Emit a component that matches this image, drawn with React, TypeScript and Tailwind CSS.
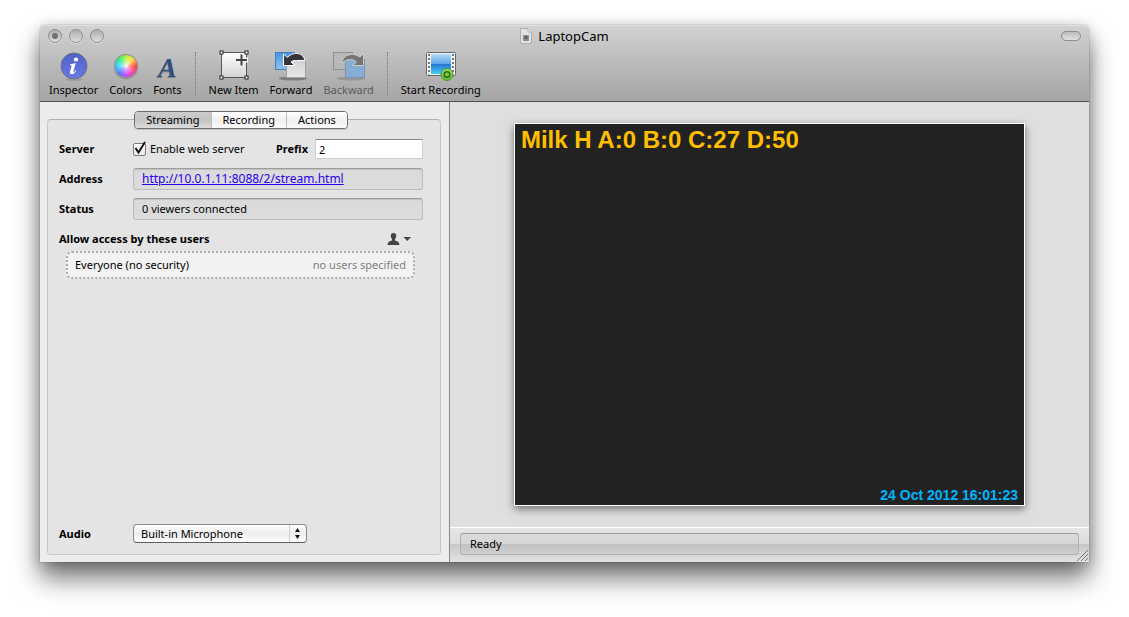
import { useId, useState } from 'react';
import type { ReactNode } from 'react';
import clsx from 'clsx';

const TABS = ['Streaming', 'Recording', 'Actions'] as const;
type Tab = (typeof TABS)[number];

function InspectorIcon() {
  return (
    <svg width="30" height="32" viewBox="0 0 30 32" aria-hidden="true">
      <defs>
        <linearGradient id="info" x1="0" y1="0" x2="0" y2="1">
          <stop offset="0" stopColor="#5060c8" />
          <stop offset="1" stopColor="#6a7ae4" />
        </linearGradient>
      </defs>
      <ellipse cx="15" cy="29.500" rx="9" ry="1.5" fill="#000" opacity=".12" />
      <circle cx="15" cy="16" r="13" fill="url(#info)" stroke="#6c6f86" />
      <ellipse cx="17" cy="9.6" rx="2.1" ry="2" fill="#fff" />
      <path
        d="M11.2 14.2c1.8-.1 3.6-.6 5.6-1.2l-2.4 8.4c-.2.8.2.9.7.5.5-.3 1-1 1.4-1.6l.7.5c-1.2 2.1-2.6 3.4-4.3 3.4-1.7 0-2.3-1.2-1.9-2.7l1.5-5.3c.2-.8-.3-1-1.5-1z"
        fill="#fff"
      />
    </svg>
  );
}

function ColorsIcon() {
  return (
    <span className="flex h-8 w-6 items-center justify-center">
      <span className="size-6 rounded-full border border-[#8a8a8a] bg-[radial-gradient(circle,#fff_0%,rgba(255,255,255,0.5)_20%,transparent_60%),conic-gradient(#b6f03c,#ffd94a_45deg,#ff4a3a_90deg,#ff3fa8_130deg,#c84cff_180deg,#5a76ff_220deg,#38d0ff_270deg,#2cf07c_320deg,#b6f03c)] shadow-[0_1px_1px_rgba(0,0,0,0.25)]" />
    </span>
  );
}

function FontsIcon() {
  return (
    <span
      className="flex h-8 items-end font-['Liberation_Serif',serif] text-[28px] leading-[29px] font-bold text-[#33507c] italic [text-shadow:0_1px_1px_rgba(0,0,0,0.3)]"
      aria-hidden="true"
    >
      A
    </span>
  );
}

function NewItemIcon() {
  return (
    <svg width="30" height="32" viewBox="0 0 30 32" aria-hidden="true">
      <defs>
        <linearGradient id="sheet" x1="0" y1="0" x2="0" y2="1">
          <stop offset="0" stopColor="#fff" />
          <stop offset="1" stopColor="#d4d4d4" />
        </linearGradient>
      </defs>
      <rect x="2.5" y="2.5" width="25" height="25" fill="url(#sheet)" stroke="#555" />
      {[2.5, 27.5].map((x) =>
        [2.5, 27.5].map((y) => (
          <rect key={`${x}-${y}`} x={x - 1.5} y={y - 1.5} width="3" height="3" fill="#fff" stroke="#222" />
        )),
      )}
      <path d="M22.5 3.5v13M16 10h13" stroke="#f4f4f4" strokeWidth="5" />
      <path d="M22.5 4.5v11M17 10h11" stroke="#444" strokeWidth="2" />
    </svg>
  );
}

function ForwardIcon() {
  return (
    <svg width="32" height="32" viewBox="0 0 32 32" aria-hidden="true">
      <defs>
        <linearGradient id="fwdBack" x1="0" y1="0" x2="0" y2="1">
          <stop offset="0" stopColor="#4a93dc" />
          <stop offset="1" stopColor="#8fc4f4" />
        </linearGradient>
        <linearGradient id="fwdFront" x1="0" y1="0" x2="0" y2="1">
          <stop offset="0" stopColor="#d2d2d2" />
          <stop offset="1" stopColor="#e8e8e8" />
        </linearGradient>
      </defs>
      <ellipse cx="18" cy="28.500" rx="14" ry="2" fill="#000" opacity=".3" />
      <rect x=".5" y="2.500" width="19" height="17" fill="url(#fwdBack)" stroke="#3f7fc0" />
      <rect x="11.500" y="10.500" width="19" height="17" fill="url(#fwdFront)" stroke="#a0a0a0" />
      <path
        d="M8.500 4v11.500h11.500l-4-3.500c1.800-1.500 4-1.700 5.500-1.500h8.500C28.500 3 19 .5 12.500 7.500z"
        fill="#36363a"
        stroke="#fff"
      />
      <path d="M20 10.500l-3 2 3 3" fill="none" stroke="#fff" />
    </svg>
  );
}

function BackwardIcon() {
  return (
    <svg width="34" height="32" viewBox="0 0 34 32" aria-hidden="true">
      <ellipse cx="19" cy="28.500" rx="14" ry="2" fill="#000" opacity=".15" />
      <rect x="1.500" y="2.500" width="19" height="17" fill="#b8b8b8" stroke="#8f8f8f" />
      <rect x="13.500" y="9.500" width="19" height="18" fill="#86aed4" stroke="#7396b8" />
      <path
        d="M31.500 3.500v12h-11l4-3.500c-3.500-3.500-9-3.500-14.500 1C10 5.500 20 1.500 28 7z"
        fill="#747474"
        stroke="#ccc"
      />
    </svg>
  );
}

function RecordIcon() {
  return (
    <svg width="32" height="32" viewBox="0 0 32 32" aria-hidden="true">
      <defs>
        <linearGradient id="film" x1="0" y1="0" x2="0" y2="1">
          <stop offset="0" stopColor="#b8dcfa" />
          <stop offset=".5" stopColor="#5aa4ea" />
          <stop offset=".52" stopColor="#2678d0" />
          <stop offset="1" stopColor="#48ccf4" />
        </linearGradient>
        <linearGradient id="badge" x1="0" y1="0" x2="0" y2="1">
          <stop offset="0" stopColor="#9bdc68" />
          <stop offset="1" stopColor="#62ba34" />
        </linearGradient>
      </defs>
      <rect x="1.500" y="2.500" width="29" height="23" rx="1" fill="#f4f4f4" stroke="#666" />
      <path d="M4 4v20.500M28 4v20.500" stroke="#777" strokeWidth="2" strokeDasharray="2 2" />
      <rect x="6" y="4" width="20" height="20" fill="url(#film)" />
      <circle cx="22" cy="24.500" r="6" fill="url(#badge)" stroke="#4c9a2c" />
      <circle cx="22" cy="24.500" r="2.800" fill="none" stroke="#2f6a18" strokeWidth="1.500" />
    </svg>
  );
}

interface ToolbarButtonProps {
  label: string;
  icon: ReactNode;
  disabled?: boolean;
}

function ToolbarButton({ label, icon, disabled }: ToolbarButtonProps) {
  return (
    <button
      type="button"
      disabled={disabled}
      className="flex flex-col items-center text-[11px] leading-4 whitespace-nowrap disabled:text-[#5c5c5c]"
    >
      {icon}
      {label}
    </button>
  );
}

function ToolbarSeparator() {
  return <span className="mx-[2px] h-11 border-l border-dotted border-[#777]" aria-hidden="true" />;
}

function WindowLight({ label, filled }: { label: string; filled?: boolean }) {
  return (
    <button
      type="button"
      aria-label={label}
      className="flex size-[14px] items-center justify-center rounded-full border border-[#8e8e8e] bg-linear-to-b from-[#aeaeae] to-[#dedede] shadow-[0_1px_0_rgba(255,255,255,0.4)]"
    >
      {filled && <span className="size-[6px] rounded-full bg-[#707070]" />}
    </button>
  );
}

function DocumentIcon() {
  return (
    <svg width="12" height="16" viewBox="0 0 12 16" aria-hidden="true">
      <path d="M.5.5h7.5l3.5 3.5v11.5H.5z" fill="#e2e2e2" stroke="#acacac" />
      <path d="M8 .5V4h3.5" fill="#f6f6f6" stroke="#acacac" />
      <rect x="3" y="7" width="6" height="6" rx="1" fill="#8c8c8c" />
      <circle cx="6" cy="9.5" r="1.5" fill="#5a5a5a" />
    </svg>
  );
}

function TitleBar() {
  return (
    <header className="rounded-t-[5px] border-b border-[#515151] bg-linear-to-b from-[#d2d2d2] to-[#a5a5a5] shadow-[inset_0_1px_0_#e2e2e2]">
      <div className="grid h-[22px] grid-cols-3 items-center px-2">
        <div className="flex gap-[7px]">
          <WindowLight label="Close" filled />
          <WindowLight label="Minimize" />
          <WindowLight label="Zoom" />
        </div>
        <h1 className="flex items-center justify-center gap-[6px] text-[13px] leading-4">
          <DocumentIcon />
          LaptopCam
        </h1>
        <button
          type="button"
          aria-label="Toggle toolbar"
          className="h-[10px] w-5 justify-self-end rounded-full border border-[#8c8c8c] bg-linear-to-b from-[#bcbcbc] to-[#e0e0e0]"
        />
      </div>
      <div className="flex items-center gap-[11px] px-[9px] py-[3px]" role="toolbar" aria-label="Main">
        <ToolbarButton label="Inspector" icon={<InspectorIcon />} />
        <ToolbarButton label="Colors" icon={<ColorsIcon />} />
        <ToolbarButton label="Fonts" icon={<FontsIcon />} />
        <ToolbarSeparator />
        <ToolbarButton label="New Item" icon={<NewItemIcon />} />
        <ToolbarButton label="Forward" icon={<ForwardIcon />} />
        <ToolbarButton label="Backward" icon={<BackwardIcon />} disabled />
        <ToolbarSeparator />
        <ToolbarButton label="Start Recording" icon={<RecordIcon />} />
      </div>
    </header>
  );
}

function TabBar({ active, onChange }: { active: Tab; onChange: (tab: Tab) => void }) {
  return (
    <div
      role="tablist"
      className="-mt-[9px] flex h-[18px] self-center overflow-hidden rounded-[4px] border border-[#6e6e6e] shadow-[0_1px_0_rgba(0,0,0,0.15)]"
    >
      {TABS.map((tab) => (
        <button
          key={tab}
          type="button"
          role="tab"
          aria-selected={tab === active}
          onClick={() => onChange(tab)}
          className={clsx(
            'border-r border-[#c0c0c0] px-[11px] leading-4 last:border-r-0',
            tab === active
              ? 'bg-linear-to-b from-[#cccccc] via-[#c4c4c4] to-[#dcdcdc]'
              : 'bg-linear-to-b from-white via-[#f0f0f0] to-[#fafafa]',
          )}
        >
          {tab}
        </button>
      ))}
    </div>
  );
}

const wellClass =
  'flex h-[22px] flex-1 items-center rounded-[3px] border border-[#bcbcbc] border-t-[#9c9c9c] bg-[#dbdbdb] px-2 shadow-[inset_0_1px_1px_rgba(0,0,0,0.12)]';

function StreamingPanel() {
  const id = useId();
  const [enabled, setEnabled] = useState(true);
  const [prefix, setPrefix] = useState('2');

  return (
    <>
      <div className="mt-[9px] flex flex-col gap-2">
        <div className="flex h-[22px] items-center">
          <span className="w-[74px] font-bold">Server</span>
          <label className="flex items-center gap-1">
            <span className="grid size-[13px]">
              <input
                type="checkbox"
                checked={enabled}
                onChange={(e) => setEnabled(e.target.checked)}
                className="col-start-1 row-start-1 size-[13px] appearance-none rounded-[2px] border border-[#7c7c7c] bg-linear-to-b from-white to-[#e8e8e8]"
              />
              {enabled && (
                <svg
                  className="pointer-events-none col-start-1 row-start-1 overflow-visible"
                  width="13"
                  height="13"
                  viewBox="0 0 13 13"
                  aria-hidden="true"
                >
                  <path d="M2.5 5l3 4.500L12-1" fill="none" stroke="#111" strokeWidth="2" />
                </svg>
              )}
            </span>
            Enable web server
          </label>
          <label htmlFor={`${id}-prefix`} className="ml-auto font-bold">
            Prefix
          </label>
          <input
            id={`${id}-prefix`}
            value={prefix}
            onChange={(e) => setPrefix(e.target.value)}
            className="ml-[7px] h-[20px] w-[108px] border border-[#cfcfcf] border-t-[#868686] bg-white px-[3px] outline-none"
          />
        </div>
        <div className="flex items-center">
          <span className="w-[74px] font-bold">Address</span>
          <div className={wellClass}>
            <a href="http://10.0.1.11:8088/2/stream.html" className="text-[12px] text-[#2a00ee] underline">
              http://10.0.1.11:8088/2/stream.html
            </a>
          </div>
        </div>
        <div className="flex items-center">
          <span className="w-[74px] font-bold">Status</span>
          <output className={wellClass}>0 viewers connected</output>
        </div>
      </div>

      <div className="mt-2 flex h-[22px] items-center justify-between">
        <h2 className="font-bold">Allow access by these users</h2>
        <button type="button" aria-label="Add user" className="mr-3">
          <svg width="24" height="12" viewBox="0 0 24 12" fill="#444" aria-hidden="true">
            <path d="M6.5 0c2 0 2.8 1.3 2.7 3-.1 1.5-.6 2.5-1.2 3.1v1.3c2 .7 4.3 1.2 4.5 4.6H.5C.7 8.600 3 8.100 5 7.400V6.100C4.400 5.500 3.900 4.500 3.800 3 3.700 1.300 4.500 0 6.500 0z" />
            <path d="M16.5 4h7.5l-3.750 4z" />
          </svg>
        </button>
      </div>
      <div className="mt-px mr-2 ml-[7px] flex h-7 items-center justify-between rounded-[6px] border-2 border-dotted border-[#aaa] bg-[#f2f2f2] px-[7px]">
        <span>Everyone (no security)</span>
        <span className="text-[#7f7f7f]">no users specified</span>
      </div>

      <div className="mt-auto mb-[11px] flex items-center">
        <label htmlFor={`${id}-audio`} className="w-[74px] font-bold">
          Audio
        </label>
        <span className="grid h-[19px] w-[174px] items-center">
          <select
            id={`${id}-audio`}
            className="col-start-1 row-start-1 h-[19px] w-full appearance-none rounded-[4px] border border-[#8a8a8a] border-b-[#5e5e5e] bg-linear-to-b from-white via-[#ececec] to-white px-[7px] leading-4 outline-none"
          >
            <option>Built-in Microphone</option>
          </select>
          <svg
            className="pointer-events-none col-start-1 row-start-1 justify-self-end"
            width="18"
            height="17"
            viewBox="0 0 18 17"
            aria-hidden="true"
          >
            <path d="M.5 0v17" stroke="#d0d0d0" />
            <path d="M6 7l2.500-4L11 7zM6 10l2.500 4L11 10z" fill="#111" />
          </svg>
        </span>
      </div>
    </>
  );
}

function Sidebar() {
  const [tab, setTab] = useState<Tab>('Streaming');

  return (
    <aside className="flex w-[410px] shrink-0 flex-col border-r border-[#868686] bg-[#ececec] pt-[17px] pr-2 pb-[7px] pl-[7px]">
      <section className="flex flex-1 flex-col rounded-[4px] border border-[#c8c8c8] border-t-[#b0b0b0] bg-[#e4e4e4] pr-[17px] pl-[11px]">
        <TabBar active={tab} onChange={setTab} />
        <StreamingPanel />
      </section>
    </aside>
  );
}

function Preview() {
  return (
    <main className="flex min-w-0 flex-1 flex-col bg-[#dfdfdf]">
      <div className="flex flex-1 items-center justify-center py-5">
        <div className="flex aspect-[4/3] w-4/5 flex-col justify-between border border-white bg-[#222] px-[6px] pb-[2px] font-['Liberation_Sans',Arial,sans-serif] font-bold shadow-[0_3px_8px_rgba(0,0,0,0.5)]">
          <p className="text-[24px] leading-8 text-[#ffbf00]">Milk H A:0 B:0 C:27 D:50</p>
          <p className="text-right text-[14px] leading-4 text-[#00b4ff]">24 Oct 2012 16:01:23</p>
        </div>
      </div>
      <footer className="relative border-t border-white bg-[linear-gradient(#e6e6e6,#dcdcdc_48%,#c8c8c8_48%,#e2e2e2)] px-[10px] pt-[5px] pb-[7px]">
        <output className="flex h-[22px] items-center rounded-[3px] border border-[#b0b0b0] border-t-[#9c9c9c] bg-black/3 px-[9px]">
          Ready
        </output>
        <svg className="absolute right-px bottom-px" width="11" height="11" viewBox="0 0 11 11" aria-hidden="true">
          <path d="M0 11L11 0M4 11l7-7M8 11l3-3" stroke="#777" />
        </svg>
      </footer>
    </main>
  );
}

export default function App() {
  return (
    <div className="flex min-h-screen bg-white px-10 pt-[25px] pb-[55px] font-['Noto_Sans',sans-serif] text-[11px] leading-4 text-black">
      <div className="flex flex-1 flex-col rounded-t-[5px] shadow-[0_0_1px_rgba(0,0,0,0.7),0_16px_26px_rgba(0,0,0,0.55),0_2px_14px_rgba(0,0,0,0.2)]">
        <TitleBar />
        <div className="flex flex-1">
          <Sidebar />
          <Preview />
        </div>
      </div>
    </div>
  );
}
